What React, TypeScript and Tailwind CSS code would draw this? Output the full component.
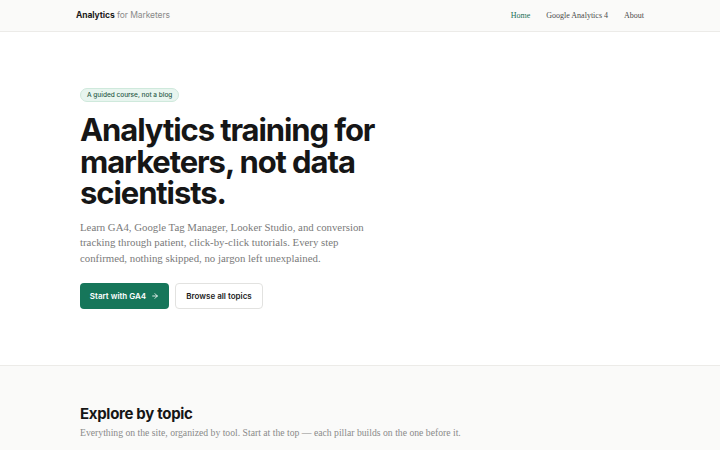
import { ArrowRight } from 'lucide-react';

const sans = { fontFamily: 'Inter, "Noto Sans", sans-serif' };
const serif = { fontFamily: '"Liberation Serif", "DejaVu Serif", serif' };

function Header() {
  return (
    <header className="h-8 bg-[#fafaf9] border-b border-[#ecebe8]">
      <div className="h-full px-[76px] flex items-center justify-between">
        <a className="text-[8.5px] tracking-[-0.01em] text-[#1c1c1c]" style={sans}>
          <span className="font-bold">Analytics</span>{' '}
          <span className="text-[#8a8a8a]">for Marketers</span>
        </a>
        <nav className="flex items-center gap-4 text-[8px] text-[#4a4a4a]" style={serif}>
          <a className="text-[#1b6f55]">Home</a>
          <a>Google Analytics 4</a>
          <a>About</a>
        </nav>
      </div>
    </header>
  );
}

function Hero() {
  return (
    <section className="bg-white border-b border-[#ecebe8]">
      <div className="px-20 pt-[56px] pb-[56px]">
        <div
          className="w-fit h-[14px] px-[6px] flex items-center rounded-full bg-[#e8f5ef] border border-[#cfe9dc] text-[6.5px] font-medium leading-none text-[#2a5a47]"
          style={sans}
        >
          A guided course, not a blog
        </div>
        <h1
          className="mt-[12px] text-[31px] leading-[31.5px] font-bold tracking-[-0.035em] text-[#161616] max-w-[310px]"
          style={sans}
        >
          Analytics training for marketers, not data scientists.
        </h1>
        <p className="mt-[11px] text-[10.8px] leading-[15.6px] text-[#7a7a7a] max-w-[300px]" style={serif}>
          Learn GA4, Google Tag Manager, Looker Studio, and conversion tracking through patient,
          click-by-click tutorials. Every step confirmed, nothing skipped, no jargon left unexplained.
        </p>
        <div className="mt-[17px] flex gap-[6px]" style={sans}>
          <button className="h-[26px] w-[89px] rounded-[4px] bg-[#16765a] text-white text-[8px] font-semibold flex items-center justify-center gap-[5px]">
            Start with GA4 <ArrowRight size={8} strokeWidth={2.5} />
          </button>
          <button className="h-[26px] w-[88px] rounded-[4px] bg-white border border-[#e2e2e0] text-[#1c1c1c] text-[8px] font-semibold">
            Browse all topics
          </button>
        </div>
      </div>
    </section>
  );
}

function Topics() {
  return (
    <section className="bg-[#fafaf9] min-h-[200px]">
      <div className="px-20 pt-[37px]">
        <h2 className="text-[15px] font-bold tracking-[-0.02em] text-[#161616]" style={sans}>
          Explore by topic
        </h2>
        <p className="text-[9.7px] text-[#8a8a8a]" style={serif}>
          Everything on the site, organized by tool. Start at the top — each pillar builds on the one before it.
        </p>
      </div>
    </section>
  );
}

export default function App() {
  return (
    <div className="w-full h-[450px] overflow-hidden bg-white">
      <Header />
      <Hero />
      <Topics />
    </div>
  );
}
